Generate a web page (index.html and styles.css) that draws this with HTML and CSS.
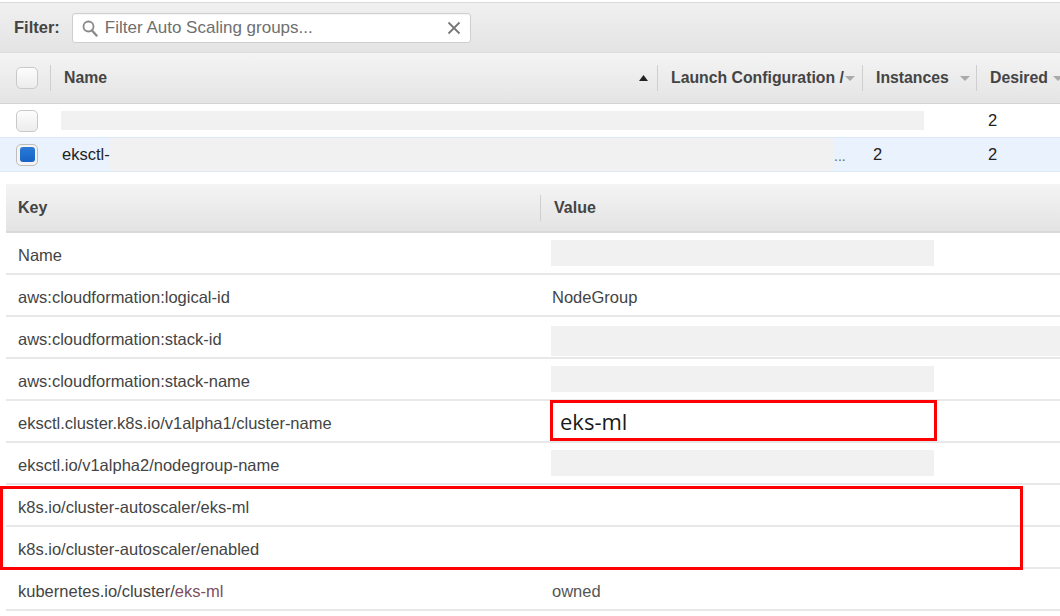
FILE: index.html
```html
<!DOCTYPE html>
<html>
<head>
<meta charset="utf-8">
<link rel="stylesheet" href="styles.css">
</head>
<body>
<div class="filterbar">
  <span class="filter-label">Filter:</span>
  <div class="search">
    <svg class="search-icon" width="16" height="17" viewBox="0 0 16 17"><circle cx="6.5" cy="6.5" r="5" fill="none" stroke="#8a8a8a" stroke-width="1.8"/><path d="M10 10.5 L14.5 15.5" stroke="#8a8a8a" stroke-width="2.4" stroke-linecap="round"/></svg>
    <span class="placeholder">Filter Auto Scaling groups...</span>
    <svg class="clear-icon" width="14" height="14" viewBox="0 0 14 14"><path d="M1.5 1.5 L12.5 12.5 M12.5 1.5 L1.5 12.5" stroke="#777" stroke-width="1.8"/></svg>
  </div>
</div>

<div class="asg">
  <div class="asg-head">
    <div class="hcell cbcell"><span class="checkbox"></span></div>
    <div class="hcell"><i class="sep"></i><span class="htext">Name</span><svg class="sort" width="9" height="6" viewBox="0 0 9 6"><path d="M0 6 L4.5 0 L9 6 Z" fill="#222"/></svg></div>
    <div class="hcell"><i class="sep"></i><span class="htext">Launch Configuration /</span><svg class="dd" width="10" height="6" viewBox="0 0 10 6"><path d="M0 0 L10 0 L5 5 Z" fill="#aaa"/></svg></div>
    <div class="hcell"><i class="sep"></i><span class="htext">Instances</span><svg class="dd dd-gap" width="10" height="6" viewBox="0 0 10 6"><path d="M0 0 L10 0 L5 5 Z" fill="#aaa"/></svg></div>
    <div class="hcell"><i class="sep"></i><span class="htext">Desired</span><svg class="dd dd-gap2" width="10" height="6" viewBox="0 0 10 6"><path d="M0 0 L10 0 L5 5 Z" fill="#aaa"/></svg></div>
  </div>
  <div class="asg-row">
    <div class="cell cbcell"><span class="checkbox"></span></div>
    <div class="cell span3"><span class="redact redact-row1"></span></div>
    <div class="cell num desired">2</div>
  </div>
  <div class="asg-row selected">
    <div class="cell cbcell"><span class="checkbox checked"><span class="tick"></span></span></div>
    <div class="cell span2 namecell"><span class="name-text">eksctl-</span><span class="redact redact-full"></span><span class="ellipsis">...</span></div>
    <div class="cell num inst">2</div>
    <div class="cell num desired">2</div>
  </div>
</div>

<div class="tags">
  <div class="tags-head">
    <div class="kcell">Key</div>
    <div class="vcell"><i class="sep"></i><span>Value</span></div>
  </div>
  <div class="trow"><div class="kcell">Name</div><div class="vcell"><span class="redact redact-val"></span></div></div>
  <div class="trow"><div class="kcell">aws:cloudformation:logical-id</div><div class="vcell">NodeGroup</div></div>
  <div class="trow"><div class="kcell">aws:cloudformation:stack-id</div><div class="vcell"><span class="redact redact-wide"></span></div></div>
  <div class="trow"><div class="kcell">aws:cloudformation:stack-name</div><div class="vcell"><span class="redact redact-val"></span></div></div>
  <div class="trow"><div class="kcell">eksctl.cluster.k8s.io/v1alpha1/cluster-name</div><div class="vcell"><span class="callout">eks-ml</span></div></div>
  <div class="trow"><div class="kcell">eksctl.io/v1alpha2/nodegroup-name</div><div class="vcell"><span class="redact redact-val"></span></div></div>
  <div class="highlight">
    <div class="trow"><div class="kcell">k8s.io/cluster-autoscaler/eks-ml</div><div class="vcell"></div></div>
    <div class="trow"><div class="kcell">k8s.io/cluster-autoscaler/enabled</div><div class="vcell"></div></div>
  </div>
  <div class="trow"><div class="kcell">kubernetes.io/cluster/<span class="mauve">eks-ml</span></div><div class="vcell owned">owned</div></div>
</div>
</body>
</html>
```

FILE: styles.css
```css
* { box-sizing: border-box; }
html, body { margin: 0; padding: 0; }
body {
  width: 1060px;
  height: 616px;
  overflow: hidden;
  background: #fff;
  color: #444;
  font-family: "Liberation Sans", Arial, sans-serif;
  font-size: 16.5px;
}

/* Filter bar */
.filterbar {
  margin-top: 2px;
  height: 51px;
  border-top: 1px solid #dadada;
  border-bottom: 1px solid #dcdcdc;
  background: linear-gradient(#f0f0f0, #e4e4e4);
  display: flex;
  align-items: center;
  padding-left: 14px;
  gap: 12px;
}
.filter-label {
  font-weight: bold;
  font-size: 16.5px;
  color: #444;
}
.search {
  width: 399px;
  height: 30px;
  background: #fff;
  border: 1px solid #cfcfcf;
  border-radius: 3px;
  display: flex;
  align-items: center;
  padding: 0 9px 0 9px;
  box-shadow: inset 0 1px 1px rgba(0,0,0,0.04);
}
.search-icon { flex: none; margin-top: 1px; }
.placeholder {
  margin-left: 7px;
  color: #6f6f6f;
  font-size: 17px;
  flex: 1;
}
.clear-icon { flex: none; }

/* ASG grid */
.asg-head, .asg-row {
  display: grid;
  grid-template-columns: 50px 607px 205px 114px 120px;
}
.asg-head {
  height: 51px;
  background: linear-gradient(#f4f4f4, #e4e4e4);
  border-bottom: 1px solid #d4d4d4;
}
.hcell {
  display: flex;
  align-items: center;
  font-weight: bold;
  font-size: 15.8px;
  color: #444;
  white-space: nowrap;
}
.sep {
  display: block;
  width: 1px;
  height: 26px;
  background: #cfcfcf;
  margin-right: 13px;
  flex: none;
}
.sort { margin-left: auto; margin-right: 9px; }
.dd { margin-left: 1px; margin-top: 2px; }
.dd-gap { margin-left: 11px; }
.dd-gap2 { margin-left: 5px; }
.cbcell { padding-left: 16px; }
.checkbox {
  display: flex;
  align-items: center;
  justify-content: center;
  width: 22px;
  height: 22px;
  border: 1px solid #c9c9c9;
  border-radius: 5px;
  background: linear-gradient(#fdfdfd, #ececec);
}
.checkbox.checked { background: #f4f4f4; border-color: #bdbdbd; }
.tick {
  display: block;
  width: 15px;
  height: 15px;
  border-radius: 3px;
  background: linear-gradient(#2a7ad6, #1763c6);
}

.asg-row {
  height: 34px;
  border-bottom: 1px solid #e2e2e2;
  font-size: 16.5px;
  color: #222;
}
.asg-row.selected {
  background: #eaf3fd;
  border-top: 1px solid #dbe8f6;
  border-bottom: 1px solid #dbe8f6;
  margin-top: -1px;
  height: 35px;
}
.cell { display: flex; align-items: center; white-space: nowrap; }
.span3 { grid-column: span 3; padding-left: 11px; }
.span2 { grid-column: span 2; }
.num { padding-left: 12px; }
.inst { padding-left: 11px; }
.redact { display: block; background: #f1f1f1; }
.redact-row1 { width: 863px; height: 19px; }
.namecell { align-items: stretch; padding-left: 12px; }
.name-text { display: flex; align-items: center; }
.redact-full { flex: 1; }
.ellipsis {
  display: flex;
  align-items: center;
  width: 29px;
  padding-left: 1px;
  font-size: 14px;
  color: #666;
  margin-top: 3px;
}

/* Tags table */
.tags {
  margin-top: 12px;
  margin-left: 6px;
}
.tags-head, .trow {
  display: grid;
  grid-template-columns: 534px 1fr;
}
.tags-head {
  height: 49px;
  background: linear-gradient(#f4f4f4, #e3e3e3);
  border-bottom: 2px solid #d9d9d9;
  font-weight: bold;
  font-size: 16px;
}
.tags-head .kcell, .tags-head .vcell { padding-top: 0; }
.tags-head .kcell { padding-left: 12px; }
.tags-head .vcell { padding-left: 0; }
.trow {
  height: 42px;
  border-bottom: 2px solid #e8e8e8;
}
.kcell, .vcell {
  display: flex;
  align-items: center;
  white-space: nowrap;
  padding-top: 4px;
}
.kcell { padding-left: 12px; color: #444; }
.vcell { padding-left: 12px; color: #444; }
.owned { color: #555; }
.mauve { color: #7c4f5f; }
.redact-val { align-self: flex-start; width: 383px; height: 26px; margin-left: -1px; margin-top: 3px; }
.redact-wide { align-self: flex-start; flex: 1; height: 30px; margin-left: -1px; margin-top: 5px; }
.callout {
  display: flex;
  align-items: center;
  flex: none;
  width: 387px;
  height: 41px;
  margin-left: -2px;
  margin-top: -5px;
  border: 3px solid #ff0000;
  padding-left: 7px;
  font-family: "Open Sans", "Noto Sans", sans-serif;
  font-size: 22px;
  color: #1a1a1a;
}
.highlight { position: relative; }
.highlight::after {
  content: "";
  position: absolute;
  top: 1px;
  bottom: -1px;
  left: -6px;
  right: 37px;
  border: 3px solid #ff0000;
  pointer-events: none;
}
```
